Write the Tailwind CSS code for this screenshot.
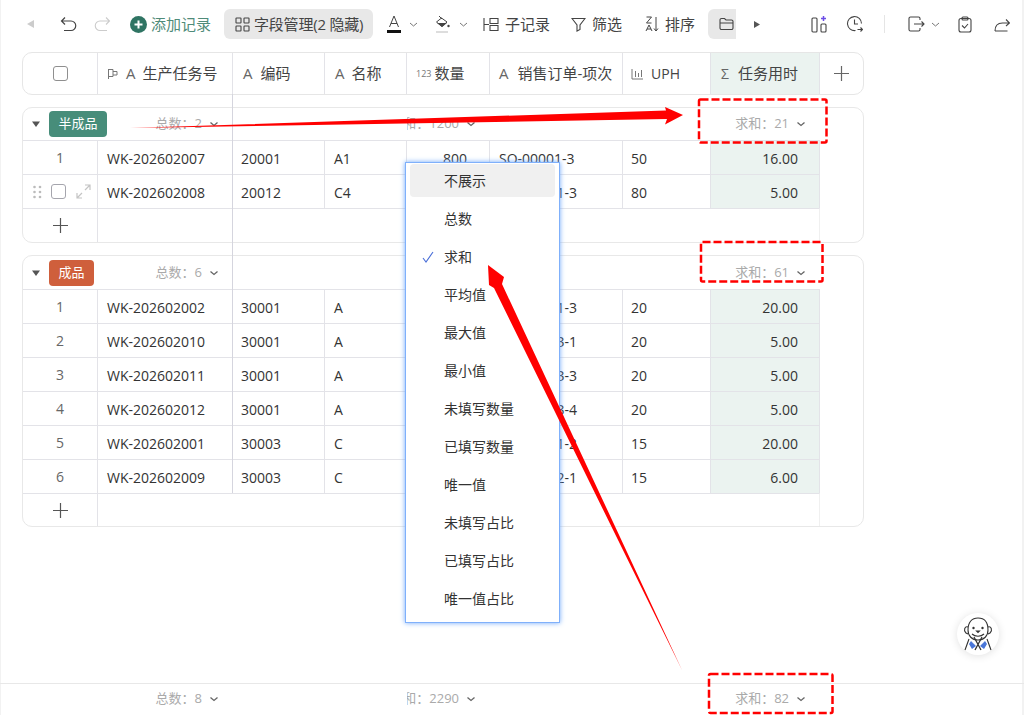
<!DOCTYPE html>
<html lang="zh">
<head>
  <meta charset="UTF-8">
  <title>生产任务</title>
  <script src="https://cdn.jsdelivr.net/npm/@tailwindcss/browser@4"></script>
</head>
<body class="bg-white text-[#333] font-['Open_Sans','Noto_Sans_CJK_SC',sans-serif] text-[14px] overflow-hidden">
<div class="relative w-[1024px] h-[715px] flex flex-col overflow-hidden shadow-[inset_1px_0_0_#f2f2f2,inset_-2px_0_0_#f2f2f2]">

  <!-- Toolbar -->
  <div class="h-[52px] flex items-center text-[#444] text-[15px] shrink-0 pb-[4px] whitespace-nowrap">
    <svg class="ml-[26px] w-[9px] h-[10px] text-[#ccc]" viewBox="0 0 9 10"><path d="M8 1 1 5l7 4z" fill="currentColor"/></svg>
    <svg class="ml-[25px] w-[17px] h-[17px]" viewBox="0 0 17 17" fill="none" stroke="#444" stroke-width="1.200"><path d="M5 1.500 1.500 5 5 8.500M1.500 5h9.500a4.500 4.500 0 0 1 0 9.500H4"/></svg>
    <svg class="ml-[17px] w-[17px] h-[17px]" viewBox="0 0 17 17" fill="none" stroke="#ccc" stroke-width="1.100"><path d="M12 1.500 15.500 5 12 8.500M15.500 5H6a4.500 4.500 0 0 0 0 9.500h7"/></svg>
    <svg class="ml-[19px] w-[17px] h-[17px]" viewBox="0 0 17 17"><circle cx="8.500" cy="8.500" r="8.500" fill="#2f7463"/><path d="M8.500 4.500v8M4.500 8.500h8" stroke="#fff" stroke-width="2"/></svg>
    <span class="ml-[4px] text-[#4f8b79]">添加记录</span>
    <div class="ml-[13px] h-[30px] w-[149px] rounded-md bg-[#e8e8e8] flex items-center pl-[11px] gap-[4px]">
      <svg class="w-[15px] h-[15px] shrink-0" viewBox="0 0 15 15" fill="none" stroke="#444" stroke-width="1.100"><rect x="1" y="1" width="5" height="5" rx=".6"/><rect x="9" y="1" width="5" height="5" rx=".6"/><rect x="1" y="9" width="5" height="5" rx=".6"/><rect x="9" y="9" width="5" height="5" rx=".6"/></svg>
      <span class="tracking-[-0.2px]">字段管理(2 隐藏)</span>
    </div>
    <svg class="ml-[14px] w-[14px] h-[18px]" viewBox="0 0 14 18" fill="none"><path d="M2.500 12 7 1l4.500 11M4 8.500h6" stroke="#444" stroke-width="1"/><rect x="0" y="15" width="14" height="3" fill="#111"/></svg>
    <svg class="ml-[8px] w-[9px] h-[9px]" viewBox="0 0 9 9" fill="none" stroke="#777"><path d="M1 3l3.500 3L8 3"/></svg>
    <svg class="ml-[17px] w-[15px] h-[19px]" viewBox="0 0 15 19" fill="none"><path d="M1.500 7 6.500 3l5.500 4-5 4.500z" stroke="#444"/><path d="M2 8h10l-5 4z" fill="#444"/><path d="M4 1l3 3" stroke="#444"/><circle cx="13.500" cy="11" r="1.200" fill="#444"/><rect x="1" y="16" width="12" height="2" fill="#ddd"/></svg>
    <svg class="ml-[9px] w-[9px] h-[9px]" viewBox="0 0 9 9" fill="none" stroke="#777"><path d="M1 3l3.500 3L8 3"/></svg>
    <svg class="ml-[15px] w-[16px] h-[15px]" viewBox="0 0 16 15" fill="none" stroke="#444" stroke-width="1.100"><path d="M1 1v13M1 7.500h5M7 1.500h8v5H7zM7 8.500h8v5H7z"/></svg>
    <span class="ml-[6px]">子记录</span>
    <svg class="ml-[21px] w-[15px] h-[15px]" viewBox="0 0 15 15" fill="none" stroke="#444" stroke-width="1.100"><path d="M1 1.500h13L9 8v4.500L6 14V8z"/></svg>
    <span class="ml-[6px]">筛选</span>
    <svg class="ml-[23px] w-[14px] h-[16px]" viewBox="0 0 14 16" fill="none" stroke="#444" stroke-width="1"><path d="M1.500 1h5L1.500 7h5M1 15 4 9l3 6M2 13h4M11 1v14M9 12.500 11 15l2-2.500"/></svg>
    <span class="ml-[6px]">排序</span>
    <div class="ml-[13px] h-[30px] w-[28px] bg-[#e8e8e8] rounded-l-md flex items-center justify-end pr-[2px]">
      <svg class="w-[15px] h-[14px]" viewBox="0 0 15 14" fill="none" stroke="#444" stroke-width="1.100"><path d="M1 3a1.500 1.500 0 0 1 1.500-1.500h3L7 3h5.500A1.500 1.500 0 0 1 14 4.500V11a1.500 1.500 0 0 1-1.500 1.500h-10A1.500 1.500 0 0 1 1 11zM1 6h13"/></svg>
    </div>
    <svg class="ml-[17px] w-[8px] h-[9px]" viewBox="0 0 8 9"><path d="M1 1l6 3.500L1 8z" fill="#555"/></svg>
    <svg class="ml-[50px] w-[16px] h-[18px]" viewBox="0 0 16 18" fill="none" stroke="#444" stroke-width="1.100"><rect x="1" y="3" width="5" height="14" rx="1"/><rect x="10" y="9" width="5" height="8" rx="1"/><path d="M12.500 1v5M10 3.500h5" stroke="#6b4de6" stroke-width="1.500"/></svg>
    <svg class="ml-[19px] w-[17px] h-[18px]" viewBox="0 0 17 18" fill="none" stroke="#444" stroke-width="1.100"><path d="M15.500 8.500a7 7 0 1 0-6 7M8.500 4.500v4.500H12M11.500 14.500h5M14.500 12.500l2 2-2 2"/></svg>
    <div class="ml-[21px] h-[18px] w-px bg-[#e5e5e5]"></div>
    <svg class="ml-[23px] w-[17px] h-[16px]" viewBox="0 0 17 16" fill="none" stroke="#444" stroke-width="1.100"><path d="M12 4V2.500A1.500 1.500 0 0 0 10.500 1h-8A1.500 1.500 0 0 0 1 2.500v11A1.500 1.500 0 0 0 2.500 15h8a1.500 1.500 0 0 0 1.500-1.500V12M6 8h10M13.500 5.500 16 8l-2.500 2.500"/></svg>
    <svg class="ml-[6px] w-[9px] h-[9px]" viewBox="0 0 9 9" fill="none" stroke="#777"><path d="M1 3l3.500 3L8 3"/></svg>
    <svg class="ml-[18px] w-[14px] h-[17px]" viewBox="0 0 14 17" fill="none" stroke="#444" stroke-width="1.100"><rect x="1" y="2.500" width="12" height="13.500" rx="2"/><rect x="4" y="1" width="6" height="3" rx="1"/><path d="M4 9.500 6.500 12 10 8"/></svg>
    <svg class="ml-[22px] w-[16px] h-[15px]" viewBox="0 0 16 15" fill="none" stroke="#444" stroke-width="1.100"><path d="M1 14h12.500M1 14c0-5.500 3-8 7.500-8H15.500M12 2.500 15.500 6 12 9"/></svg>
  </div>

  <!-- Column header -->
  <div class="ml-[22px] w-[842px] h-[43px] shrink-0 border border-[#e6e6e6] rounded-[10px] grid grid-cols-[75px_135px_92px_82px_83px_133px_88px_109px_1fr] text-[#444] text-[15px] overflow-hidden whitespace-nowrap">
    <div class="border-r border-[#e3e3e8] flex items-center justify-center">
      <span class="w-[15px] h-[15px] border-[1.5px] border-[#8f8f8f] rounded-[3px]"></span>
    </div>
    <div class="border-r border-[#e3e3e8] flex items-center pl-[9px]">
      <svg class="w-[12px] h-[12px] mr-[7px]" viewBox="0 0 12 12" fill="none" stroke="#777"><path d="M1.500 1v10M1.500 1.500h4.500v7h-4.500M6 3.500h4v3.500H6"/></svg>
      <span class="text-[#666] mr-[7px]">A</span>生产任务号
    </div>
    <div class="border-r border-[#e3e3e8] flex items-center pl-[10px]"><span class="text-[#666] mr-[8px]">A</span>编码</div>
    <div class="border-r border-[#e3e3e8] flex items-center pl-[10px]"><span class="text-[#666] mr-[7px]">A</span>名称</div>
    <div class="border-r border-[#e3e3e8] flex items-center pl-[9px]"><span class="text-[#777] text-[9px] mr-[3px]">123</span>数量</div>
    <div class="border-r border-[#e3e3e8] flex items-center pl-[9px]"><span class="text-[#666] mr-[9px]">A</span>销售订单-项次</div>
    <div class="border-r border-[#e3e3e8] flex items-center pl-[8px]">
      <svg class="w-[13px] h-[12px] mr-[7px]" viewBox="0 0 13 12" fill="none" stroke="#777"><path d="M1 1v10h11M4.500 3v6M7.500 5v4M10.500 2v7"/></svg><span class="text-[14px]">UPH</span>
    </div>
    <div class="border-r border-[#e3e3e8] bg-[#ebf3f0] flex items-center pl-[10px]"><span class="text-[#666] mr-[9px] text-[14px]">Σ</span>任务用时</div>
    <div class="flex items-center justify-center">
      <svg class="w-[15px] h-[15px]" viewBox="0 0 15 15" stroke="#666" stroke-width="1.200"><path d="M7.500 0v15M0 7.500h15"/></svg>
    </div>
  </div>

  <!-- Group 1 -->
  <div class="ml-[22px] mt-[12px] w-[842px] h-[136px] shrink-0 border border-[#e8e8e8] rounded-[10px] overflow-hidden">
    <div class="h-[32px] grid grid-cols-[75px_135px_92px_82px_83px_133px_88px_109px] text-[#aaa] text-[13px] whitespace-nowrap">
      <div class="col-span-2 flex items-center pr-[14px]">
        <svg class="ml-[9px] w-[8px] h-[8px]" viewBox="0 0 8 8"><path d="M0 1.500h8L4 7z" fill="#555"/></svg>
        <span class="ml-[9px] w-[58px] h-[26px] rounded-[4px] bg-[#478d7a] text-white flex items-center justify-center">半成品</span>
        <span class="ml-auto">总数：2</span>
        <svg class="ml-[7px] w-[10px] h-[10px]" viewBox="0 0 10 10" fill="none" stroke="#666" stroke-width="1.300"><path d="M1.500 3.500 5 6.500l3.500-3"/></svg>
      </div>
      <div></div><div></div>
      <div class="flex items-center justify-end pr-[14px] overflow-hidden">
        <span class="shrink-0">求和：1200</span>
        <svg class="ml-[7px] w-[10px] h-[10px] shrink-0" viewBox="0 0 10 10" fill="none" stroke="#666" stroke-width="1.300"><path d="M1.500 3.500 5 6.500l3.500-3"/></svg>
      </div>
      <div></div><div></div>
      <div class="flex items-center justify-end pr-[14px]">
        <span>求和：21</span>
        <svg class="ml-[7px] w-[10px] h-[10px]" viewBox="0 0 10 10" fill="none" stroke="#666" stroke-width="1.300"><path d="M1.500 3.500 5 6.500l3.500-3"/></svg>
      </div>
    </div>
    <div class="w-[797px] grid grid-cols-[75px_135px_92px_82px_83px_133px_88px_109px] h-[34px] border-t border-[#e3e3e8] [&>div]:border-r [&>div]:border-[#e3e3e8] [&>div]:flex [&>div]:items-center">
      <div class="justify-center text-[#666]">1</div><div class="pl-[9px] pt-[2px]">WK-202602007</div><div class="pl-[8px] pt-[2px]">20001</div><div class="pl-[9px] pt-[2px]">A1</div><div class="justify-end pr-[22px] pt-[2px]">800</div><div class="pl-[9px] pt-[2px]">SO-00001-3</div><div class="pl-[8px] pt-[2px]">50</div><div class="bg-[#ebf3f0] justify-end pr-[21px] pt-[2px]">16.00</div>
    </div>
    <div class="w-[797px] grid grid-cols-[75px_135px_92px_82px_83px_133px_88px_109px] h-[34px] border-t border-[#e3e3e8] [&>div]:border-r [&>div]:border-[#e3e3e8] [&>div]:flex [&>div]:items-center">
      <div class="pl-[10px] gap-[9px]">
        <svg class="w-[9px] h-[14px]" viewBox="0 0 9 14" fill="#bbb"><circle cx="1.500" cy="2" r="1.300"/><circle cx="7" cy="2" r="1.300"/><circle cx="1.500" cy="7" r="1.300"/><circle cx="7" cy="7" r="1.300"/><circle cx="1.500" cy="12" r="1.300"/><circle cx="7" cy="12" r="1.300"/></svg>
        <span class="w-[15px] h-[15px] border-[1.5px] border-[#a5a5ad] rounded-[3px]"></span>
        <svg class="ml-px w-[15px] h-[15px]" viewBox="0 0 15 15" fill="none" stroke="#c4c4c4" stroke-width="1.200"><path d="M9 1h5v5M14 1 9 6M6 14H1V9M1 14l5-5"/></svg>
      </div>
      <div class="pl-[9px] pt-[2px]">WK-202602008</div><div class="pl-[8px] pt-[2px]">20012</div><div class="pl-[9px] pt-[2px]">C4</div><div></div><div class="justify-end pr-[45px] pt-[2px]">1-3</div><div class="pl-[8px] pt-[2px]">80</div><div class="bg-[#ebf3f0] justify-end pr-[21px] pt-[2px]">5.00</div>
    </div>
    <div class="w-[797px] grid grid-cols-[75px_1fr] h-[34px] border-t border-r border-t-[#e3e3e8] border-r-[#f0f0f0]">
      <div class="border-r border-[#e3e3e8] flex items-center justify-center">
        <svg class="w-[15px] h-[15px]" viewBox="0 0 15 15" stroke="#555" stroke-width="1.200"><path d="M7.500 0v15M0 7.500h15"/></svg>
      </div>
    </div>
  </div>

  <!-- Group 2 -->
  <div class="ml-[22px] mt-[12px] w-[842px] h-[272px] shrink-0 border border-[#e8e8e8] rounded-[10px] overflow-hidden">
    <div class="h-[33px] grid grid-cols-[75px_135px_92px_82px_83px_133px_88px_109px] text-[#aaa] text-[13px] whitespace-nowrap">
      <div class="col-span-2 flex items-center pr-[14px]">
        <svg class="ml-[9px] w-[8px] h-[8px]" viewBox="0 0 8 8"><path d="M0 1.500h8L4 7z" fill="#555"/></svg>
        <span class="ml-[9px] w-[45px] h-[26px] rounded-[4px] bg-[#cf5f3c] text-white flex items-center justify-center">成品</span>
        <span class="ml-auto">总数：6</span>
        <svg class="ml-[7px] w-[10px] h-[10px]" viewBox="0 0 10 10" fill="none" stroke="#666" stroke-width="1.300"><path d="M1.500 3.500 5 6.500l3.500-3"/></svg>
      </div>
      <div></div><div></div><div></div><div></div><div></div>
      <div class="flex items-center justify-end pr-[14px]">
        <span>求和：61</span>
        <svg class="ml-[7px] w-[10px] h-[10px]" viewBox="0 0 10 10" fill="none" stroke="#666" stroke-width="1.300"><path d="M1.500 3.500 5 6.500l3.500-3"/></svg>
      </div>
    </div>
    <div id="rows"></div>
    <div class="w-[797px] grid grid-cols-[75px_1fr] h-[33px] border-t border-r border-t-[#e3e3e8] border-r-[#f0f0f0]">
      <div class="border-r border-[#e3e3e8] flex items-center justify-center">
        <svg class="w-[15px] h-[15px]" viewBox="0 0 15 15" stroke="#555" stroke-width="1.200"><path d="M7.500 0v15M0 7.500h15"/></svg>
      </div>
    </div>
  </div>

  <!-- Footer totals -->
  <div class="mt-auto ml-[23px] w-[797px] h-[32px] grid grid-cols-[75px_135px_92px_82px_83px_133px_88px_109px] text-[#aaa] text-[13px] shrink-0 whitespace-nowrap">
    <div class="col-span-2 flex items-center justify-end pr-[14px]">
      <span>总数：8</span>
      <svg class="ml-[7px] w-[10px] h-[10px]" viewBox="0 0 10 10" fill="none" stroke="#666" stroke-width="1.300"><path d="M1.500 3.500 5 6.500l3.500-3"/></svg>
    </div>
    <div></div><div></div>
    <div class="flex items-center justify-end pr-[14px] overflow-hidden">
      <span class="shrink-0">求和：2290</span>
      <svg class="ml-[7px] w-[10px] h-[10px] shrink-0" viewBox="0 0 10 10" fill="none" stroke="#666" stroke-width="1.300"><path d="M1.500 3.500 5 6.500l3.500-3"/></svg>
    </div>
    <div></div><div></div>
    <div class="flex items-center justify-end pr-[14px]">
      <span>求和：82</span>
      <svg class="ml-[7px] w-[10px] h-[10px]" viewBox="0 0 10 10" fill="none" stroke="#666" stroke-width="1.300"><path d="M1.500 3.500 5 6.500l3.500-3"/></svg>
    </div>
  </div>
  <div class="absolute left-0 right-0 top-[683px] h-px bg-[#e8e8e8]"></div>

  <!-- Frozen column line -->
  <div class="absolute left-[232px] top-[94px] w-px h-[399px] bg-[#d5d5de]"></div>

  <!-- Aggregate menu -->
  <div class="absolute left-[405px] top-[162px] w-[155px] h-[461px] bg-white border border-[#7fb0fb] shadow-[0_0_5px_#6fa8fa] px-[4px] pt-[1px] text-[#333] text-[14px]">
    <div class="h-[33px] mb-[5px] rounded-[4px] bg-[#f0f0f0] flex items-center pl-[34px]">不展示</div>
    <div class="h-[33px] mb-[5px] flex items-center pl-[34px]">总数</div>
    <div class="relative h-[33px] mb-[5px] flex items-center pl-[34px]">
      <svg class="absolute left-[12px] top-[11px] w-[12px] h-[12px]" viewBox="0 0 12 12" fill="none" stroke="#4a6fd8" stroke-width="1.100"><path d="M1 7l3 4 7-10"/></svg>求和
    </div>
    <div class="h-[33px] mb-[5px] flex items-center pl-[34px]">平均值</div>
    <div class="h-[33px] mb-[5px] flex items-center pl-[34px]">最大值</div>
    <div class="h-[33px] mb-[5px] flex items-center pl-[34px]">最小值</div>
    <div class="h-[33px] mb-[5px] flex items-center pl-[34px]">未填写数量</div>
    <div class="h-[33px] mb-[5px] flex items-center pl-[34px]">已填写数量</div>
    <div class="h-[33px] mb-[5px] flex items-center pl-[34px]">唯一值</div>
    <div class="h-[33px] mb-[5px] flex items-center pl-[34px]">未填写占比</div>
    <div class="h-[33px] mb-[5px] flex items-center pl-[34px]">已填写占比</div>
    <div class="h-[33px] flex items-center pl-[34px]">唯一值占比</div>
  </div>

  <!-- Assistant button -->
  <div class="absolute left-[957px] top-[613px] w-[42px] h-[42px] rounded-full bg-white shadow-[0_1px_8px_rgba(0,0,0,.12)] flex items-center justify-center">
    <svg class="w-[34px] h-[36px]" viewBox="0 0 34 36" fill="none" stroke="#333" stroke-width="1.100">
      <path d="M7 11c-3-1-5 3-2 6l2 1M27 11c3-1 5 3 2 6l-2 1"/>
      <path d="M7 14C7 6 11 2 17 2s10 4 10 12c0 6-4 10-10 10S7 20 7 14z" fill="#fff"/>
      <circle cx="12.500" cy="12" r="1.200" fill="#333" stroke="none"/><circle cx="21.500" cy="12" r="1.200" fill="#333" stroke="none"/>
      <path d="M15.500 15h3l-1.500 1.500zM11 18c3 3 9 3 12 0"/>
      <path d="M8 23 4 34M26 23l4 11"/>
      <path d="M10 25l5 5-4 3-3-5zM24 25l-5 5 4 3 3-5z" fill="#4a76d8" stroke="none"/>
      <path d="M13 21l7 13M21 21l-7 13" stroke-width="1.300"/>
    </svg>
  </div>

  <!-- Annotations -->
  <svg class="absolute inset-0 w-[1024px] h-[715px] pointer-events-none" viewBox="0 0 1024 715" fill="none">
    <path d="M130 128 L666 110.500 L665 107 L683 115 L665 124.500 L667 119z" fill="#ff0000"/>
    <path d="M488 265 L504 277 L502 284 L682 670 L494 288 L489 285z" fill="#ff0000"/>
    <g stroke="#ff0000" stroke-width="2.500" stroke-dasharray="8 3">
      <rect x="699" y="99.500" width="127.500" height="43" rx="1.500"/>
      <rect x="701" y="242" width="121.500" height="39.500" rx="1.500"/>
      <rect x="709" y="674" width="123.500" height="39" rx="1.500"/>
    </g>
  </svg>
</div>

<script>
  // 数量 sits behind the menu in these rows, only the tail of the order number shows
  const rows = [
    ["1", "WK-202602002", "30001", "A", "1-3", "20", "20.00"],
    ["2", "WK-202602010", "30001", "A", "3-1", "20", "5.00"],
    ["3", "WK-202602011", "30001", "A", "3-3", "20", "5.00"],
    ["4", "WK-202602012", "30001", "A", "3-4", "20", "5.00"],
    ["5", "WK-202602001", "30003", "C", "1-2", "15", "20.00"],
    ["6", "WK-202602009", "30003", "C", "2-1", "15", "6.00"],
  ];
  document.getElementById("rows").innerHTML = rows.map(r => `
    <div class="w-[797px] grid grid-cols-[75px_135px_92px_82px_83px_133px_88px_109px] h-[34px] border-t border-[#e3e3e8] [&>div]:border-r [&>div]:border-[#e3e3e8] [&>div]:flex [&>div]:items-center">
      <div class="justify-center text-[#666]">${r[0]}</div>
      <div class="pl-[9px] pt-[2px]">${r[1]}</div>
      <div class="pl-[8px] pt-[2px]">${r[2]}</div>
      <div class="pl-[9px] pt-[2px]">${r[3]}</div>
      <div></div>
      <div class="justify-end pr-[45px] pt-[2px]">${r[4]}</div>
      <div class="pl-[8px] pt-[2px]">${r[5]}</div>
      <div class="bg-[#ebf3f0] justify-end pr-[21px] pt-[2px]">${r[6]}</div>
    </div>`).join("");
</script>
</body>
</html>
